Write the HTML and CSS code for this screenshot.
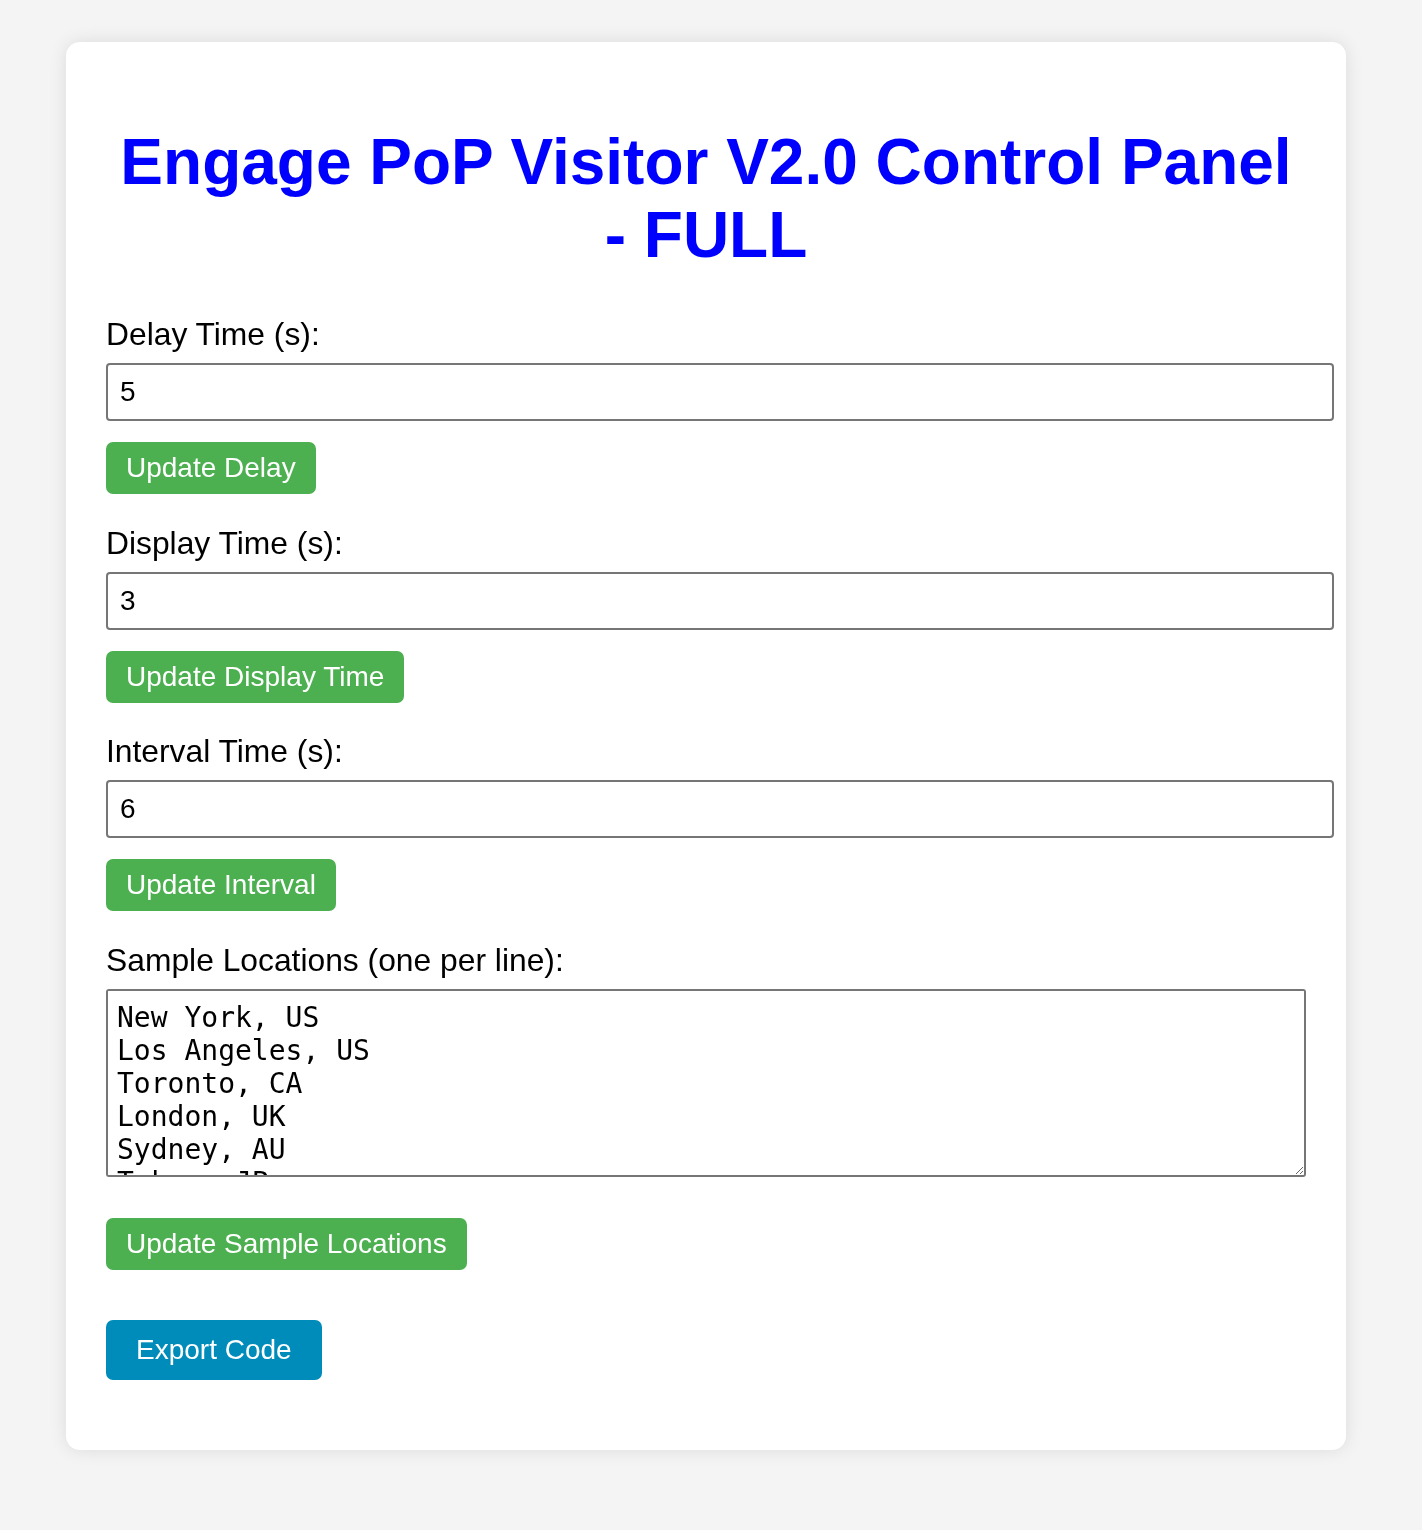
FILE: index.html
```html
<!DOCTYPE html>
<html lang="en">
<head>
  <meta charset="UTF-8">
  <title>Engage PoP Visitor V2.0 Control Panel - FULL</title>
  <link rel="stylesheet" href="styles.css">
</head>
<body>

<div class="container">
  <h1>Engage PoP Visitor V2.0 Control Panel - FULL</h1>

  <div class="field">
    <label for="delayTime">Delay Time (s):</label>
    <input type="number" id="delayTime" value="5">
    <button class="btn">Update Delay</button>
  </div>

  <div class="field">
    <label for="displayTime">Display Time (s):</label>
    <input type="number" id="displayTime" value="3">
    <button class="btn">Update Display Time</button>
  </div>

  <div class="field">
    <label for="intervalTime">Interval Time (s):</label>
    <input type="number" id="intervalTime" value="6">
    <button class="btn">Update Interval</button>
  </div>

  <div class="field">
    <label for="locations">Sample Locations (one per line):</label>
    <textarea id="locations">New York, US
Los Angeles, US
Toronto, CA
London, UK
Sydney, AU
Tokyo, JP
Berlin, DE
Paris, FR</textarea>
    <button class="btn">Update Sample Locations</button>
  </div>

  <div class="export">
    <button class="btn btn-export">Export Code</button>
  </div>
</div>

</body>
</html>
```

FILE: styles.css
```css
body {
  font-family: "Liberation Sans", Arial, sans-serif;
  background-color: #f4f4f4;
  margin: 0;
  padding: 42px 10px 80px 0;
  color: #000;
}
.container {
  width: 1280px;
  box-sizing: border-box;
  margin: 0 auto;
  background-color: #ffffff;
  border-radius: 14px;
  box-shadow: 0 0 18px rgba(0,0,0,0.1);
  padding: 40px 40px 70px;
}
h1 {
  color: #0000ff;
  text-align: center;
  font-size: 64px;
  line-height: 73px;
  font-weight: bold;
  margin: 44px 0;
}
.field {
  margin-bottom: 30.5px;
}
label {
  display: block;
  font-size: 31.8px;
  line-height: 36px;
  margin-bottom: 11px;
}
input {
  display: block;
  width: 100%;
  padding: 11px 12px;
  border: 2px solid #767676;
  border-radius: 4px;
  font-family: "Liberation Sans", Arial, sans-serif;
  font-size: 28px;
  line-height: 32px;
  color: #000;
  margin: 0 0 21px;
}
input::-webkit-outer-spin-button,
input::-webkit-inner-spin-button {
  -webkit-appearance: none;
  margin: 0;
}
textarea {
  display: block;
  box-sizing: border-box;
  width: 100%;
  height: 188px;
  padding: 10px 9px;
  border: 2px solid #767676;
  border-radius: 3px;
  font-family: "DejaVu Sans Mono", "Liberation Mono", monospace;
  font-size: 28px;
  line-height: 33px;
  color: #000;
  margin: 0 0 41px;
}
.btn {
  font-family: "Liberation Sans", Arial, sans-serif;
  font-size: 28px;
  line-height: 32px;
  padding: 10px 20px;
  background-color: #4caf50;
  color: #fff;
  border: none;
  border-radius: 7px;
  cursor: pointer;
}
.export {
  margin-top: 50px;
}
.btn-export {
  background-color: #008cba;
  padding: 14px 30px;
}
```
